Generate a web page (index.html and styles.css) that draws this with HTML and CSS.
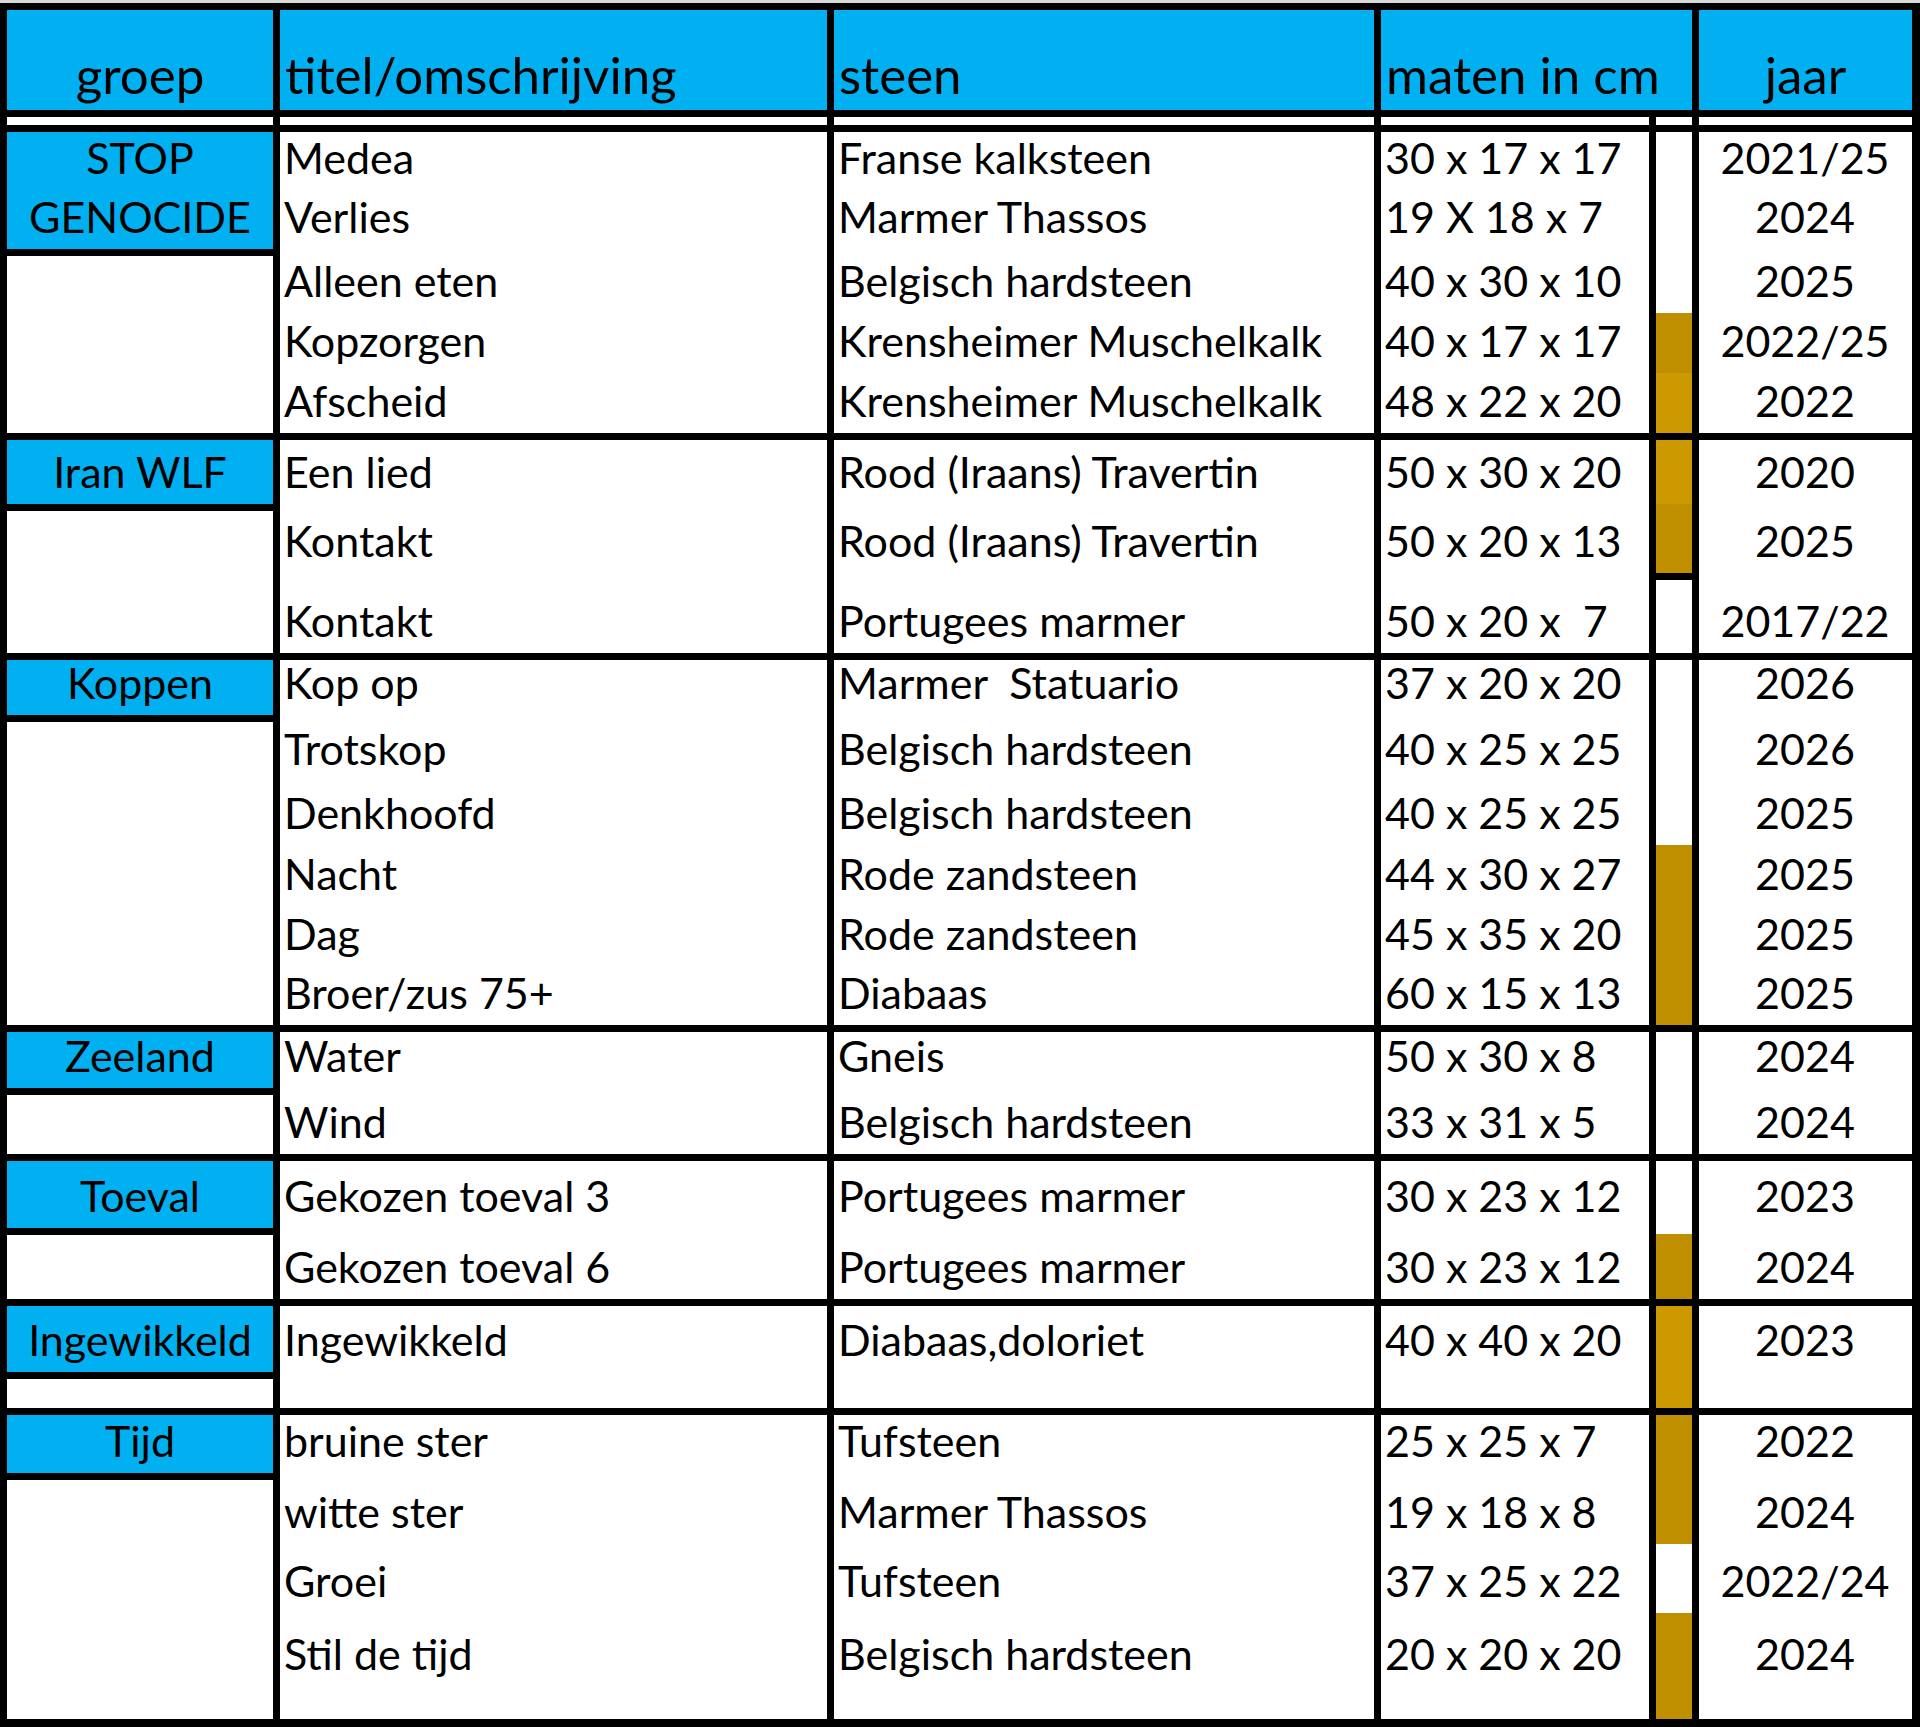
FILE: index.html
```html
<!DOCTYPE html>
<html lang="nl">
<head>
<meta charset="utf-8">
<title>Beelden overzicht</title>
<link rel="stylesheet" href="styles.css">
</head>
<body>
<div class="topline"></div>
<div class="sheet">
  <div class="row head">
    <div class="hc center">groep</div>
    <div class="hc">titel/omschrijving</div>
    <div class="hc">steen</div>
    <div class="hc span2">maten in cm</div>
    <div class="hc center">jaar</div>
  </div>
  <div class="row spacer">
    <div></div><div></div><div></div><div></div><div></div><div></div>
  </div>

  <div class="row grp g1">
    <div class="label two"><span>STOP</span><span>GENOCIDE</span></div>
    <div class="rest r3"></div>
    <div class="c">Medea</div><div class="c">Franse kalksteen</div><div class="c">30 x 17 x 17</div><div class="n"></div><div class="c y">2021/25</div>
    <div class="c">Verlies</div><div class="c">Marmer Thassos</div><div class="c">19 X 18 x 7</div><div class="n"></div><div class="c y">2024</div>
    <div class="c">Alleen eten</div><div class="c">Belgisch hardsteen</div><div class="c">40 x 30 x 10</div><div class="n"></div><div class="c y">2025</div>
    <div class="c">Kopzorgen</div><div class="c">Krensheimer Muschelkalk</div><div class="c">40 x 17 x 17</div><div class="n dark"></div><div class="c y">2022/25</div>
    <div class="c">Afscheid</div><div class="c">Krensheimer Muschelkalk</div><div class="c">48 x 22 x 20</div><div class="n light"></div><div class="c y">2022</div>
  </div>

  <div class="row grp g2">
    <div class="label"><span>Iran WLF</span></div>
    <div class="rest"></div>
    <div class="c">Een lied</div><div class="c">Rood (Iraans) Travertin</div><div class="c">50 x 30 x 20</div><div class="n light"></div><div class="c y">2020</div>
    <div class="c">Kontakt</div><div class="c">Rood (Iraans) Travertin</div><div class="c">50 x 20 x 13</div><div class="n dark"></div><div class="c y">2025</div>
    <div class="c">Kontakt</div><div class="c">Portugees marmer</div><div class="c">50 x 20 x  7</div><div class="n ruled"></div><div class="c y">2017/22</div>
  </div>

  <div class="row grp g3">
    <div class="label"><span>Koppen</span></div>
    <div class="rest"></div>
    <div class="c">Kop op</div><div class="c">Marmer  Statuario</div><div class="c">37 x 20 x 20</div><div class="n"></div><div class="c y">2026</div>
    <div class="c">Trotskop</div><div class="c">Belgisch hardsteen</div><div class="c">40 x 25 x 25</div><div class="n"></div><div class="c y">2026</div>
    <div class="c">Denkhoofd</div><div class="c">Belgisch hardsteen</div><div class="c">40 x 25 x 25</div><div class="n"></div><div class="c y">2025</div>
    <div class="c">Nacht</div><div class="c">Rode zandsteen</div><div class="c">44 x 30 x 27</div><div class="n dark"></div><div class="c y">2025</div>
    <div class="c">Dag</div><div class="c">Rode zandsteen</div><div class="c">45 x 35 x 20</div><div class="n dark"></div><div class="c y">2025</div>
    <div class="c">Broer/zus 75+</div><div class="c">Diabaas</div><div class="c">60 x 15 x 13</div><div class="n dark"></div><div class="c y">2025</div>
  </div>

  <div class="row grp g4">
    <div class="label"><span>Zeeland</span></div>
    <div class="rest"></div>
    <div class="c">Water</div><div class="c">Gneis</div><div class="c">50 x 30 x 8</div><div class="n"></div><div class="c y">2024</div>
    <div class="c">Wind</div><div class="c">Belgisch hardsteen</div><div class="c">33 x 31 x 5</div><div class="n"></div><div class="c y">2024</div>
  </div>

  <div class="row grp g5">
    <div class="label"><span>Toeval</span></div>
    <div class="rest"></div>
    <div class="c">Gekozen toeval 3</div><div class="c">Portugees marmer</div><div class="c">30 x 23 x 12</div><div class="n"></div><div class="c y">2023</div>
    <div class="c">Gekozen toeval 6</div><div class="c">Portugees marmer</div><div class="c">30 x 23 x 12</div><div class="n dark lowered"></div><div class="c y">2024</div>
  </div>

  <div class="row grp g6">
    <div class="label"><span>Ingewikkeld</span></div>
    <div class="rest"></div>
    <div class="c">Ingewikkeld</div><div class="c">Diabaas,doloriet</div><div class="c">40 x 40 x 20</div><div class="n light"></div><div class="c y">2023</div>
    <div class="c"></div><div class="c"></div><div class="c"></div><div class="n light"></div><div class="c y"></div>
  </div>

  <div class="row grp g7">
    <div class="label"><span>Tijd</span></div>
    <div class="rest"></div>
    <div class="c">bruine ster</div><div class="c">Tufsteen</div><div class="c">25 x 25 x 7</div><div class="n dark"></div><div class="c y">2022</div>
    <div class="c">witte ster</div><div class="c">Marmer Thassos</div><div class="c">19 x 18 x 8</div><div class="n dark"></div><div class="c y">2024</div>
    <div class="c">Groei</div><div class="c">Tufsteen</div><div class="c">37 x 25 x 22</div><div class="n"></div><div class="c y">2022/24</div>
    <div class="c">Stil de tijd</div><div class="c">Belgisch hardsteen</div><div class="c">20 x 20 x 20</div><div class="n dark"></div><div class="c y">2024</div>
    <div class="c"></div><div class="c"></div><div class="c"></div><div class="n dark"></div><div class="c y"></div>
  </div>
</div>
</body>
</html>
```

FILE: styles.css
```css
html, body {
  margin: 0;
  padding: 0;
  background: #ffffff;
}

body {
  font-family: Lato, "Open Sans", sans-serif;
  color: #000000;
  width: 1920px;
}

.topline {
  height: 3px;
  background: #d9d9d9;
}

.sheet {
  background: #000000;
  padding: 7px 8px 8px 7px;
  display: flex;
  flex-direction: column;
  gap: 7px;
}

.row {
  display: grid;
  grid-template-columns: 266px 547px 540px 268px 36px 213px;
  column-gap: 7px;
  row-gap: 0;
}

/* header */
.head {
  height: 100px;
}

.hc {
  background: #00b0f0;
  display: flex;
  align-items: flex-end;
  padding: 0 5px 10px;
  font-size: 51px;
  line-height: 51px;
  white-space: pre;
}

.hc.center {
  justify-content: center;
}

.hc.span2 {
  grid-column: span 2;
}

.spacer {
  height: 8px;
}

.spacer > div {
  background: #ffffff;
}

/* data groups */
.grp {
  font-size: 43px;
}

.g1 { grid-template-rows: 58px 59px 64px 60px 60px; }
.g2 { grid-template-rows: 64px 69px 80px; }
.g3 { grid-template-rows: 55px 66px 64px 61px 60px 59px; }
.g4 { grid-template-rows: 56px 66px; }
.g5 { grid-template-rows: 67px 71px; }
.g6 { grid-template-rows: 66px 36px; }
.g7 { grid-template-rows: 58px 71px 69px 73px 33px; }

.label {
  grid-column: 1;
  grid-row: 1 / 2;
  background: #00b0f0;
  display: flex;
  flex-direction: column;
  justify-content: flex-end;
  align-items: center;
  padding-bottom: 11px;
  line-height: 43px;
  white-space: nowrap;
}

.label.two {
  grid-row: 1 / 3;
}

.label.two span + span {
  margin-top: 16px;
}

.rest {
  grid-column: 1;
  grid-row: 2 / -1;
  background: #ffffff;
  border-top: 7px solid #000000;
}

.rest.r3 {
  grid-row: 3 / -1;
}

.c {
  background: #ffffff;
  display: flex;
  align-items: flex-end;
  padding: 0 5px 11px 4px;
  line-height: 43px;
  white-space: pre;
}

.c.y {
  justify-content: center;
}

.n {
  background: #ffffff;
}

.n.dark {
  background: #bf8f00;
}

.n.light {
  background: #cc9a00;
}

.n.lowered {
  border-top: 6px solid #ffffff;
}

.n.ruled {
  border-top: 7px solid #000000;
}
```
